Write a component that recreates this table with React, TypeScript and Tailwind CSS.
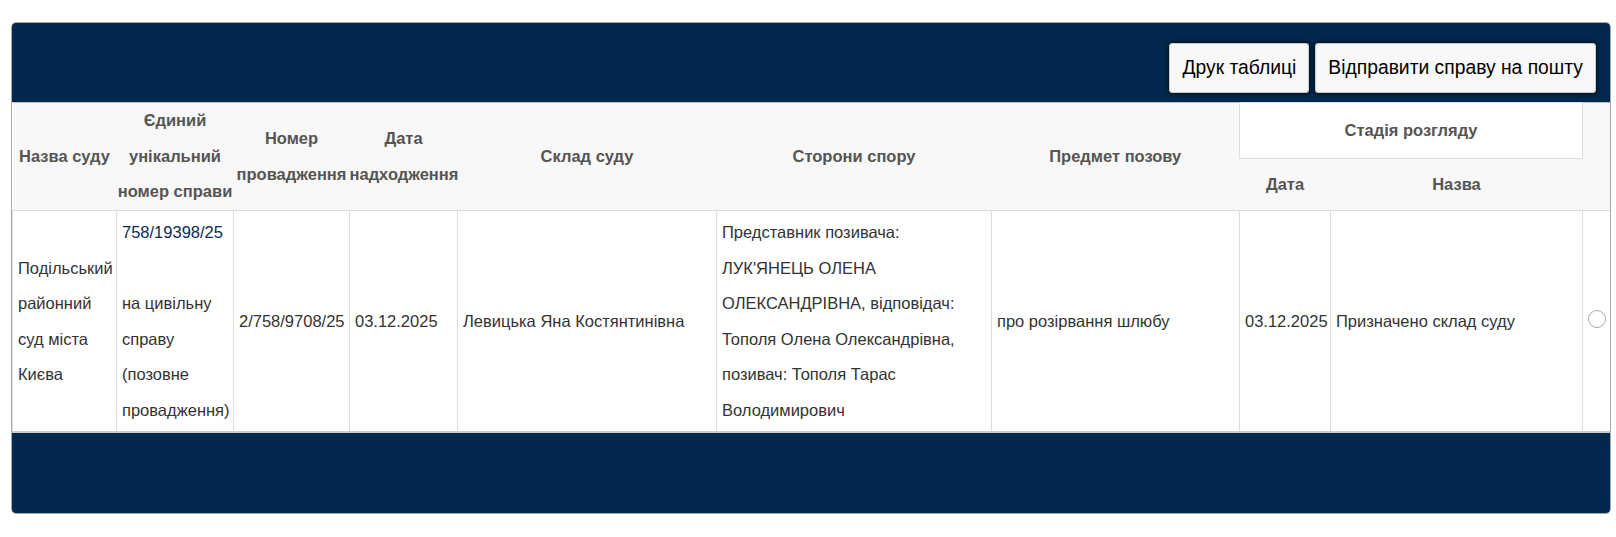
import React from 'react';

const cols = [104, 117, 116, 108, 259, 275, 248, 91, 252, 28];

const thBase = 'font-bold text-[16.5px] leading-[35.5px] text-[#555] text-center align-middle px-0 py-0';
const tdBase = 'border-x border-[#ddd] pl-[5px] pr-[4px] pt-[4px] pb-[3px] align-middle text-[16.5px] leading-[35.5px] text-[#333] text-left';

const App: React.FC = () => {
  return (
    <div className="min-h-screen bg-white pt-[22px] px-[11px]" style={{ fontFamily: '"Liberation Sans", Arial, sans-serif' }}>
      <div className="w-[1600px] border border-[#aaa] rounded-[5px] overflow-hidden">
        {/* top bar */}
        <div className="h-[79px] bg-[#03284d] flex justify-end items-start gap-[6px] pt-[20px] pr-[14px]">
          <button className="h-[50px] px-[12px] bg-[#f8f8f8] border border-[#ccc] rounded-[3px] text-[19.3px] text-black shadow-[0_0_5px_rgba(0,0,0,0.9)]">
            Друк таблиці
          </button>
          <button className="h-[50px] px-[12px] bg-[#f8f8f8] border border-[#ccc] rounded-[3px] text-[19.3px] text-black shadow-[0_0_5px_rgba(0,0,0,0.9)]">
            Відправити справу на пошту
          </button>
        </div>

        <table className="w-[1598px] table-fixed border-collapse border-t border-[#bbb]">
          <colgroup>
            {cols.map((w, i) => (
              <col key={i} style={{ width: w }} />
            ))}
          </colgroup>
          <thead className="bg-[#f8f8f8]">
            <tr className="h-[56px]">
              <th rowSpan={2} className={thBase}>Назва суду</th>
              <th rowSpan={2} className={thBase}>Єдиний унікальний номер справи</th>
              <th rowSpan={2} className={thBase}>Номер провадження</th>
              <th rowSpan={2} className={thBase}>Дата надходження</th>
              <th rowSpan={2} className={thBase}>Склад суду</th>
              <th rowSpan={2} className={thBase}>Сторони спору</th>
              <th rowSpan={2} className={thBase}>Предмет позову</th>
              <th colSpan={2} className={`${thBase} bg-white border border-[#ddd]`}>Стадія розгляду</th>
              <th rowSpan={2} className={thBase}></th>
            </tr>
            <tr className="h-[52px]">
              <th className={thBase}>Дата</th>
              <th className={thBase}>Назва</th>
            </tr>
          </thead>
          <tbody>
            <tr className="border-t border-[#ddd] border-b-2 border-b-[#ccc]">
              <td className={tdBase}>Подільський районний суд міста Києва</td>
              <td className={tdBase}>
                <a className="text-[#0a2a50]">758/19398/25</a>
                <br />
                <br />
                на цивільну справу (позовне провадження)
              </td>
              <td className={tdBase}>2/758/9708/25</td>
              <td className={tdBase}>03.12.2025</td>
              <td className={tdBase}>Левицька Яна Костянтинівна</td>
              <td className={tdBase}>
                Представник позивача: ЛУК'ЯНЕЦЬ ОЛЕНА ОЛЕКСАНДРІВНА, відповідач: Тополя Олена Олександрівна, позивач: Тополя Тарас Володимирович
              </td>
              <td className={tdBase}>про розірвання шлюбу</td>
              <td className={tdBase}>03.12.2025</td>
              <td className={tdBase}>Призначено склад суду</td>
              <td className="border-x border-[#ddd] p-0 align-middle">
                <div className="flex justify-center">
                  <span className="block w-[18px] h-[18px] rounded-full border border-[#aaa] bg-white mt-[-4px]" />
                </div>
              </td>
            </tr>
          </tbody>
        </table>

        {/* bottom bar */}
        <div className="h-[80px] bg-[#03284d]" />
      </div>
    </div>
  );
};

export default App;
